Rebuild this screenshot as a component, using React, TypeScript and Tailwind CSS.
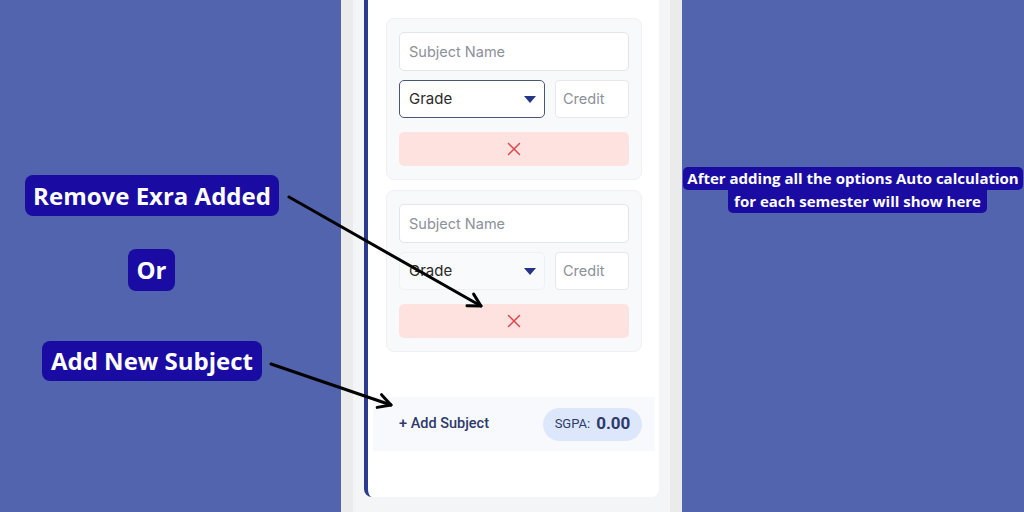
import { X } from "lucide-react";

const Label = ({ text, className = "" }: { text: string; className?: string }) => (
  <div
    className={`bg-[#1a0ba3] text-white font-bold rounded-[8px] text-[24px] leading-none flex items-center justify-center whitespace-nowrap ${className}`}
    style={{ fontFamily: '"Open Sans", sans-serif' }}
  >
    {text}
  </div>
);

const SubjectBlock = ({ focused }: { focused: boolean }) => (
  <div className="ml-[18px] mr-[17px] bg-[#f8f9fb] border border-[#eef0f3] rounded-[8px] px-[12px] pt-[13px] pb-[13px] flex flex-col">
    <div className="h-[39px] bg-white border border-[#e2e5e9] rounded-[5px] flex items-center px-[9px] text-[14.5px] text-[#8b9099]">
      Subject Name
    </div>
    <div className="flex gap-[10px] mt-[9px]">
      <div
        className={`w-[146px] h-[38px] rounded-[5px] flex items-center justify-between pl-[9px] pr-[8px] text-[15px] text-[#2a2a2a] ${
          focused ? "bg-white border border-[#4a5573]" : "bg-[#f9fafb] border border-[#f0f1f4]"
        }`}
      >
        <span>Grade</span>
        <svg width="12" height="7" viewBox="0 0 12 7">
          <path d="M0 0 L12 0 L6 7 Z" fill="#253585" />
        </svg>
      </div>
      <div className="flex-1 h-[38px] bg-white border border-[#e6e8ec] rounded-[4px] flex items-center px-[7px] text-[14.5px] text-[#8b9099]">
        Credit
      </div>
    </div>
    <div className="mt-[14px] h-[34px] bg-[#fee2e0] rounded-[5px] flex items-center justify-center">
      <X size={22} strokeWidth={1.6} color="#e0474c" />
    </div>
  </div>
);

const Arrow = ({ x1, y1, x2, y2 }: { x1: number; y1: number; x2: number; y2: number }) => {
  const a = Math.atan2(y2 - y1, x2 - x1);
  const len = 14;
  const s = 0.5;
  const p1 = [x2 - len * Math.cos(a - s), y2 - len * Math.sin(a - s)];
  const p2 = [x2 - len * Math.cos(a + s), y2 - len * Math.sin(a + s)];
  return (
    <g stroke="#000" strokeWidth={3} strokeLinecap="round" fill="none">
      <line x1={x1} y1={y1} x2={x2} y2={y2} />
      <path d={`M${p1[0]} ${p1[1]} L${x2} ${y2} L${p2[0]} ${p2[1]}`} strokeLinejoin="round" />
    </g>
  );
};

export default function App() {
  return (
    <div className="relative w-[1024px] h-[512px] overflow-hidden bg-[#5264ae] flex">
      {/* left annotations */}
      <div className="w-[341px] flex flex-col pt-[175px]">
        <Label text="Remove Exra Added" className="ml-[25px] w-[254px] h-[41px]" />
        <Label text="Or" className="ml-[128px] mt-[33px] w-[47px] h-[42px]" />
        <Label text="Add New Subject" className="ml-[42px] mt-[50px] w-[220px] h-[40px]" />
      </div>

      {/* phone panel */}
      <div className="w-[341px] h-full bg-[#ebebeb] pl-[12px] pr-[12px]">
        <div className="h-full bg-[#f4f5f6] px-[11px]" style={{ fontFamily: "Inter, sans-serif" }}>
          <div className="h-[497px] bg-white border-l-[4px] border-[#2b3b8f] rounded-b-[8px] flex flex-col pt-[18px]">
            <SubjectBlock focused />
            <div className="h-[10px]" />
            <SubjectBlock focused={false} />
            <div
              className="mt-[45px] ml-[5px] mr-[4px] h-[54px] bg-[#f7f9fc] flex items-center justify-between pl-[26px] pr-[13px]"
              style={{ fontFamily: "Roboto, sans-serif" }}
            >
              <span className="text-[14.5px] font-medium text-[#2e3a6b]">+ Add Subject</span>
              <div className="w-[99px] h-[33px] rounded-full bg-[#dce7fb] flex items-center justify-center gap-[6px] text-[#2e3a6b]">
                <span className="text-[13px]">SGPA:</span>
                <span className="text-[17px] font-bold">0.00</span>
              </div>
            </div>
          </div>
        </div>
      </div>

      {/* right annotation */}
      <div
        className="flex-1 flex flex-col items-center pt-[167px] text-white font-bold text-[15px] leading-none"
        style={{ fontFamily: '"Open Sans", sans-serif' }}
      >
        <div className="bg-[#1a0ba3] h-[23px] px-[4px] rounded-[5px] flex items-center whitespace-nowrap">
          After adding all the options Auto calculation
        </div>
        <div className="bg-[#1a0ba3] h-[23px] px-[6px] ml-[9px] rounded-b-[5px] flex items-center whitespace-nowrap">
          for each semester will show here
        </div>
      </div>

      {/* arrows */}
      <svg className="absolute inset-0 pointer-events-none" width="1024" height="512">
        <Arrow x1={289} y1={197} x2={481} y2={306} />
        <Arrow x1={271} y1={364} x2={391} y2={405} />
      </svg>
    </div>
  );
}
